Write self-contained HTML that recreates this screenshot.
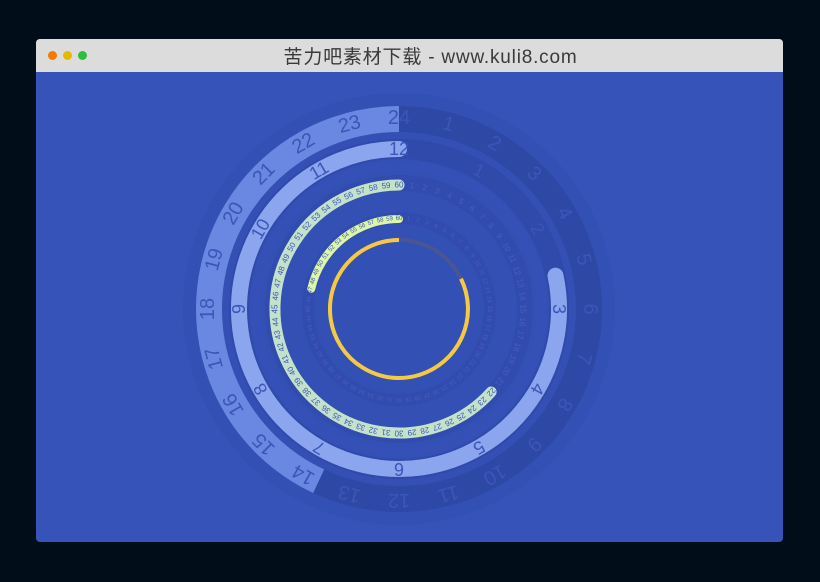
<!DOCTYPE html>
<html><head><meta charset="utf-8"><style>
html,body{margin:0;padding:0;background:#020d1a;width:820px;height:582px;overflow:hidden}
.win{position:absolute;left:36px;top:39px;width:747px;height:503px;border-radius:4px;overflow:hidden;background:#3653b9}
.bar{position:absolute;left:0;top:0;width:747px;height:33px;background:#dcdcdc}
.dot{position:absolute;top:12px;width:9px;height:9px;border-radius:50%}
.title{position:absolute;left:0;width:789px;top:3px;text-align:center;font:19px "Liberation Sans","Noto Sans CJK SC",sans-serif;letter-spacing:0.8px;color:#3a3a3a}
svg{position:absolute;left:0;top:0}
text{font-family:"Liberation Sans",sans-serif;text-anchor:middle;dominant-baseline:central}
</style></head><body>
<div class="win">
<div class="bar"><div class="dot" style="left:12px;background:#f57a00"></div><div class="dot" style="left:27px;background:#e6b800"></div><div class="dot" style="left:42px;background:#2bc03a"></div>
<div class="title">苦力吧素材下载 - www.kuli8.com</div></div>
</div>
<svg width="820" height="582" viewBox="0 0 820 582">
<circle cx="399" cy="309" r="216" fill="#3350b4"/>
<circle cx="399" cy="309" r="190" fill="none" stroke="#2e48a6" stroke-width="26"/>
<circle cx="399" cy="309" r="172" fill="none" stroke="#3450b5" stroke-width="8"/>
<circle cx="399" cy="309" r="160" fill="none" stroke="#304aab" stroke-width="20"/>
<circle cx="399" cy="309" r="143" fill="none" stroke="#3550b6" stroke-width="10"/>
<circle cx="399" cy="309" r="126" fill="none" stroke="#314cae" stroke-width="16"/>
<circle cx="399" cy="309" r="107" fill="none" stroke="#3450b5" stroke-width="14"/>
<circle cx="399" cy="309" r="91" fill="none" stroke="#314cae" stroke-width="12"/>
<circle cx="399" cy="309" r="78" fill="none" stroke="#3350b4" stroke-width="10"/>
<path d="M318.7 481.2 A190 190 0 0 1 399 119" fill="none" stroke="#6a87e2" stroke-width="26"/>
<path d="M555.5 275.7 A160 160 0 1 1 399 149" fill="none" stroke="#8ba6ef" stroke-width="16" stroke-linecap="round"/>
<path d="M491.1 392 A124 124 0 1 1 399 185" fill="none" stroke="#c3e2c9" stroke-width="11" stroke-linecap="round"/>
<path d="M311.3 288.7 A90 90 0 0 1 399 219" fill="none" stroke="#dcf7a6" stroke-width="8" stroke-linecap="round"/>
<circle cx="399" cy="309" r="69" fill="none" stroke="#4a5595" stroke-width="4"/>
<path d="M461 278.8 A69 69 0 1 1 399 240" fill="none" stroke="#f6c945" stroke-width="4"/>
<g fill="#3c56b8" font-size="20">
<text x="399" y="118" transform="rotate(0 399 309)">24</text><text x="399" y="118" transform="rotate(15 399 309)">1</text><text x="399" y="118" transform="rotate(30 399 309)">2</text><text x="399" y="118" transform="rotate(45 399 309)">3</text><text x="399" y="118" transform="rotate(60 399 309)">4</text><text x="399" y="118" transform="rotate(75 399 309)">5</text><text x="399" y="118" transform="rotate(90 399 309)">6</text><text x="399" y="118" transform="rotate(105 399 309)">7</text><text x="399" y="118" transform="rotate(120 399 309)">8</text><text x="399" y="118" transform="rotate(135 399 309)">9</text><text x="399" y="118" transform="rotate(150 399 309)">10</text><text x="399" y="118" transform="rotate(165 399 309)">11</text><text x="399" y="118" transform="rotate(180 399 309)">12</text><text x="399" y="118" transform="rotate(195 399 309)">13</text><text x="399" y="118" transform="rotate(210 399 309)">14</text><text x="399" y="118" transform="rotate(225 399 309)">15</text><text x="399" y="118" transform="rotate(240 399 309)">16</text><text x="399" y="118" transform="rotate(255 399 309)">17</text><text x="399" y="118" transform="rotate(270 399 309)">18</text><text x="399" y="118" transform="rotate(285 399 309)">19</text><text x="399" y="118" transform="rotate(300 399 309)">20</text><text x="399" y="118" transform="rotate(315 399 309)">21</text><text x="399" y="118" transform="rotate(330 399 309)">22</text><text x="399" y="118" transform="rotate(345 399 309)">23</text>
</g>
<g fill="#3c56b8" font-size="18">
<text x="399" y="149" transform="rotate(0 399 309)">12</text><text x="399" y="149" transform="rotate(30 399 309)">1</text><text x="399" y="149" transform="rotate(60 399 309)">2</text><text x="399" y="149" transform="rotate(90 399 309)">3</text><text x="399" y="149" transform="rotate(120 399 309)">4</text><text x="399" y="149" transform="rotate(150 399 309)">5</text><text x="399" y="149" transform="rotate(180 399 309)">6</text><text x="399" y="149" transform="rotate(210 399 309)">7</text><text x="399" y="149" transform="rotate(240 399 309)">8</text><text x="399" y="149" transform="rotate(270 399 309)">9</text><text x="399" y="149" transform="rotate(300 399 309)">10</text><text x="399" y="149" transform="rotate(330 399 309)">11</text>
</g>
<g fill="#4560c0" font-size="8">
<text x="399" y="185" transform="rotate(6 399 309)">1</text><text x="399" y="185" transform="rotate(12 399 309)">2</text><text x="399" y="185" transform="rotate(18 399 309)">3</text><text x="399" y="185" transform="rotate(24 399 309)">4</text><text x="399" y="185" transform="rotate(30 399 309)">5</text><text x="399" y="185" transform="rotate(36 399 309)">6</text><text x="399" y="185" transform="rotate(42 399 309)">7</text><text x="399" y="185" transform="rotate(48 399 309)">8</text><text x="399" y="185" transform="rotate(54 399 309)">9</text><text x="399" y="185" transform="rotate(60 399 309)">10</text><text x="399" y="185" transform="rotate(66 399 309)">11</text><text x="399" y="185" transform="rotate(72 399 309)">12</text><text x="399" y="185" transform="rotate(78 399 309)">13</text><text x="399" y="185" transform="rotate(84 399 309)">14</text><text x="399" y="185" transform="rotate(90 399 309)">15</text><text x="399" y="185" transform="rotate(96 399 309)">16</text><text x="399" y="185" transform="rotate(102 399 309)">17</text><text x="399" y="185" transform="rotate(108 399 309)">18</text><text x="399" y="185" transform="rotate(114 399 309)">19</text><text x="399" y="185" transform="rotate(120 399 309)">20</text><text x="399" y="185" transform="rotate(126 399 309)">21</text>
</g>
<g fill="#3c56b8" font-size="8">
<text x="399" y="185" transform="rotate(132 399 309)">22</text><text x="399" y="185" transform="rotate(138 399 309)">23</text><text x="399" y="185" transform="rotate(144 399 309)">24</text><text x="399" y="185" transform="rotate(150 399 309)">25</text><text x="399" y="185" transform="rotate(156 399 309)">26</text><text x="399" y="185" transform="rotate(162 399 309)">27</text><text x="399" y="185" transform="rotate(168 399 309)">28</text><text x="399" y="185" transform="rotate(174 399 309)">29</text><text x="399" y="185" transform="rotate(180 399 309)">30</text><text x="399" y="185" transform="rotate(186 399 309)">31</text><text x="399" y="185" transform="rotate(192 399 309)">32</text><text x="399" y="185" transform="rotate(198 399 309)">33</text><text x="399" y="185" transform="rotate(204 399 309)">34</text><text x="399" y="185" transform="rotate(210 399 309)">35</text><text x="399" y="185" transform="rotate(216 399 309)">36</text><text x="399" y="185" transform="rotate(222 399 309)">37</text><text x="399" y="185" transform="rotate(228 399 309)">38</text><text x="399" y="185" transform="rotate(234 399 309)">39</text><text x="399" y="185" transform="rotate(240 399 309)">40</text><text x="399" y="185" transform="rotate(246 399 309)">41</text><text x="399" y="185" transform="rotate(252 399 309)">42</text><text x="399" y="185" transform="rotate(258 399 309)">43</text><text x="399" y="185" transform="rotate(264 399 309)">44</text><text x="399" y="185" transform="rotate(270 399 309)">45</text><text x="399" y="185" transform="rotate(276 399 309)">46</text><text x="399" y="185" transform="rotate(282 399 309)">47</text><text x="399" y="185" transform="rotate(288 399 309)">48</text><text x="399" y="185" transform="rotate(294 399 309)">49</text><text x="399" y="185" transform="rotate(300 399 309)">50</text><text x="399" y="185" transform="rotate(306 399 309)">51</text><text x="399" y="185" transform="rotate(312 399 309)">52</text><text x="399" y="185" transform="rotate(318 399 309)">53</text><text x="399" y="185" transform="rotate(324 399 309)">54</text><text x="399" y="185" transform="rotate(330 399 309)">55</text><text x="399" y="185" transform="rotate(336 399 309)">56</text><text x="399" y="185" transform="rotate(342 399 309)">57</text><text x="399" y="185" transform="rotate(348 399 309)">58</text><text x="399" y="185" transform="rotate(354 399 309)">59</text><text x="399" y="185" transform="rotate(360 399 309)">60</text>
</g>
<g fill="#4560c0" font-size="6">
<text x="399" y="219" transform="rotate(6 399 309)">1</text><text x="399" y="219" transform="rotate(12 399 309)">2</text><text x="399" y="219" transform="rotate(18 399 309)">3</text><text x="399" y="219" transform="rotate(24 399 309)">4</text><text x="399" y="219" transform="rotate(30 399 309)">5</text><text x="399" y="219" transform="rotate(36 399 309)">6</text><text x="399" y="219" transform="rotate(42 399 309)">7</text><text x="399" y="219" transform="rotate(48 399 309)">8</text><text x="399" y="219" transform="rotate(54 399 309)">9</text><text x="399" y="219" transform="rotate(60 399 309)">10</text><text x="399" y="219" transform="rotate(66 399 309)">11</text><text x="399" y="219" transform="rotate(72 399 309)">12</text><text x="399" y="219" transform="rotate(78 399 309)">13</text><text x="399" y="219" transform="rotate(84 399 309)">14</text><text x="399" y="219" transform="rotate(90 399 309)">15</text><text x="399" y="219" transform="rotate(96 399 309)">16</text><text x="399" y="219" transform="rotate(102 399 309)">17</text><text x="399" y="219" transform="rotate(108 399 309)">18</text><text x="399" y="219" transform="rotate(114 399 309)">19</text><text x="399" y="219" transform="rotate(120 399 309)">20</text><text x="399" y="219" transform="rotate(126 399 309)">21</text><text x="399" y="219" transform="rotate(132 399 309)">22</text><text x="399" y="219" transform="rotate(138 399 309)">23</text><text x="399" y="219" transform="rotate(144 399 309)">24</text><text x="399" y="219" transform="rotate(150 399 309)">25</text><text x="399" y="219" transform="rotate(156 399 309)">26</text><text x="399" y="219" transform="rotate(162 399 309)">27</text><text x="399" y="219" transform="rotate(168 399 309)">28</text><text x="399" y="219" transform="rotate(174 399 309)">29</text><text x="399" y="219" transform="rotate(180 399 309)">30</text><text x="399" y="219" transform="rotate(186 399 309)">31</text><text x="399" y="219" transform="rotate(192 399 309)">32</text><text x="399" y="219" transform="rotate(198 399 309)">33</text><text x="399" y="219" transform="rotate(204 399 309)">34</text><text x="399" y="219" transform="rotate(210 399 309)">35</text><text x="399" y="219" transform="rotate(216 399 309)">36</text><text x="399" y="219" transform="rotate(222 399 309)">37</text><text x="399" y="219" transform="rotate(228 399 309)">38</text><text x="399" y="219" transform="rotate(234 399 309)">39</text><text x="399" y="219" transform="rotate(240 399 309)">40</text><text x="399" y="219" transform="rotate(246 399 309)">41</text><text x="399" y="219" transform="rotate(252 399 309)">42</text><text x="399" y="219" transform="rotate(258 399 309)">43</text><text x="399" y="219" transform="rotate(264 399 309)">44</text><text x="399" y="219" transform="rotate(270 399 309)">45</text><text x="399" y="219" transform="rotate(276 399 309)">46</text>
</g>
<g fill="#3c56b8" font-size="6">
<text x="399" y="219" transform="rotate(282 399 309)">47</text><text x="399" y="219" transform="rotate(288 399 309)">48</text><text x="399" y="219" transform="rotate(294 399 309)">49</text><text x="399" y="219" transform="rotate(300 399 309)">50</text><text x="399" y="219" transform="rotate(306 399 309)">51</text><text x="399" y="219" transform="rotate(312 399 309)">52</text><text x="399" y="219" transform="rotate(318 399 309)">53</text><text x="399" y="219" transform="rotate(324 399 309)">54</text><text x="399" y="219" transform="rotate(330 399 309)">55</text><text x="399" y="219" transform="rotate(336 399 309)">56</text><text x="399" y="219" transform="rotate(342 399 309)">57</text><text x="399" y="219" transform="rotate(348 399 309)">58</text><text x="399" y="219" transform="rotate(354 399 309)">59</text><text x="399" y="219" transform="rotate(360 399 309)">60</text>
</g>
</svg>
</body></html>
